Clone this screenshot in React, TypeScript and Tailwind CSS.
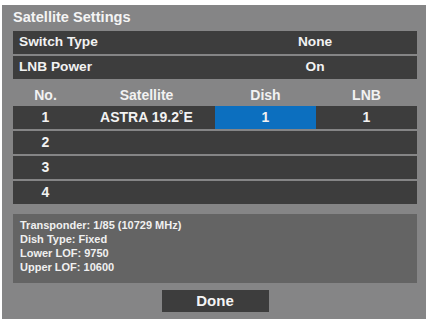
import React from "react";

const font = { fontFamily: '"Liberation Sans", Arial, Helvetica, sans-serif' };

function SettingRow({ label, value }: { label: string; value: string }) {
  return (
    <div className="flex h-[23px] items-center bg-[#3d3d3d] text-[13.7px] font-bold text-[#f2f2f2]">
      <div className="w-[200px] pl-[6px]">{label}</div>
      <div className="flex-1 text-center">{value}</div>
    </div>
  );
}

function TableRow({ no, sat, dish, lnb }: { no: string; sat?: string; dish?: string; lnb?: string }) {
  return (
    <div className="flex h-[23px] bg-[#3d3d3d] text-[14px] font-bold text-[#f2f2f2]">
      <div className="flex w-[65px] items-center justify-center">{no}</div>
      <div className="flex w-[137px] items-center justify-center">{sat}</div>
      <div className={`flex w-[101px] items-center justify-center ${dish ? "bg-[#0c6fbf]" : ""}`}>{dish}</div>
      <div className="flex w-[101px] items-center justify-center">{lnb}</div>
    </div>
  );
}

export default function App() {
  return (
    <div className="h-[323px] w-[426px] bg-white pl-[2px] pt-[5px]" style={font}>
      <div className="flex h-[314px] flex-col bg-[#858586] pl-[11px] pr-[9px]">
        <div className="flex h-[26px] items-center text-[14.6px] font-bold text-[#f4f4f4]">Satellite Settings</div>
        <div className="flex flex-col gap-[2px]">
          <SettingRow label="Switch Type" value="None" />
          <SettingRow label="LNB Power" value="On" />
        </div>
        <div className="flex h-[27px] pt-[8px] text-[14px] font-bold leading-[16px] text-[#f2f2f2]">
          <div className="w-[65px] text-center">No.</div>
          <div className="w-[137px] text-center">Satellite</div>
          <div className="w-[101px] text-center">Dish</div>
          <div className="w-[101px] text-center">LNB</div>
        </div>
        <div className="flex flex-col gap-[2px]">
          <TableRow no="1" sat="ASTRA 19.2˚E" dish="1" lnb="1" />
          <TableRow no="2" />
          <TableRow no="3" />
          <TableRow no="4" />
        </div>
        <div className="mt-[10px] h-[69px] bg-[#646464] pl-[7px] pt-[4px] text-[11px] font-bold leading-[14px] text-[#f0f0f0]">
          <div>Transponder: 1/85 (10729 MHz)</div>
          <div>Dish Type: Fixed</div>
          <div>Lower LOF: 9750</div>
          <div>Upper LOF: 10600</div>
        </div>
        <div className="mt-[7px] flex justify-center">
          <div className="flex h-[22px] w-[107px] items-center justify-center bg-[#3d3d3d] text-[15px] font-bold text-[#f4f4f4]">
            Done
          </div>
        </div>
      </div>
    </div>
  );
}
